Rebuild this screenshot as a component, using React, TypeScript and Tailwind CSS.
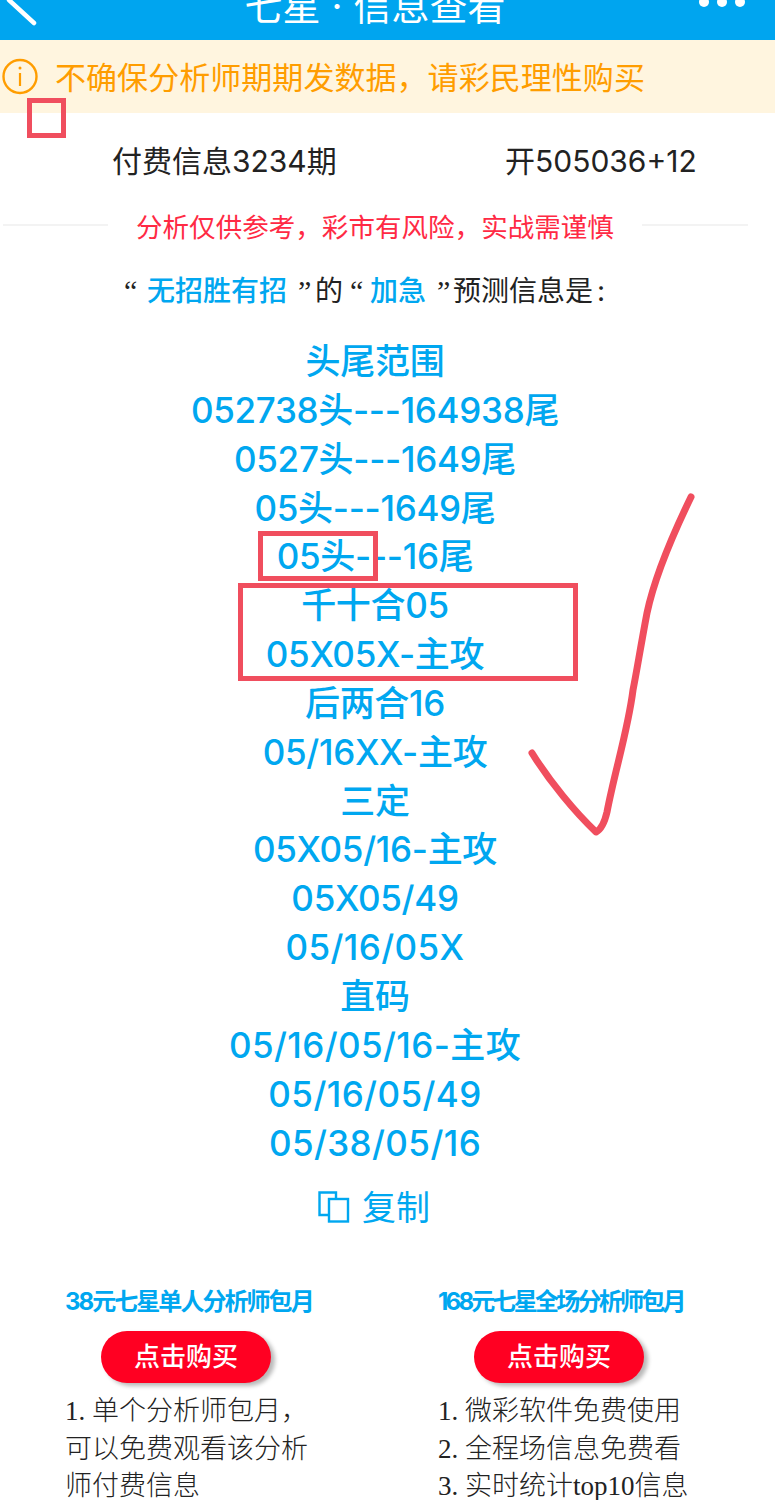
const cjk = "font-['Inter','Noto_Sans_CJK_SC',sans-serif]";
const quote = "font-['Liberation_Serif',serif] text-[30px] w-[12px]";

const picks = [
  "头尾范围",
  "052738头---164938尾",
  "0527头---1649尾",
  "05头---1649尾",
  "05头---16尾",
  "千十合05",
  "05X05X-主攻",
  "后两合16",
  "05/16XX-主攻",
  "三定",
  "05X05/16-主攻",
  "05X05/49",
  "05/16/05X",
  "直码",
  "05/16/05/16-主攻",
  "05/16/05/49",
  "05/38/05/16",
];

function Plan({ title, titleClass, lines }: { title: string; titleClass: string; lines: string[] }) {
  return (
    <div className="w-[300px]">
      <p className={`mt-[1px] text-[24px] leading-[30px] font-bold text-[#00a7f0] whitespace-nowrap ${titleClass}`}>
        {title}
      </p>
      <button
        type="button"
        className="mt-[14px] ml-[36px] block w-[170px] h-[52px] pb-[2px] rounded-full bg-[#ff0022] text-white text-[26px] font-medium shadow-[4px_3px_4px_rgba(0,0,0,0.28)]"
      >
        点击购买
      </button>
      <div className="mt-[10px] text-[27px] leading-[37.5px] font-light text-[#222] whitespace-nowrap font-['Liberation_Serif','Noto_Sans_CJK_SC',serif]">
        {lines.map((line) => (
          <p key={line}>{line}</p>
        ))}
      </div>
    </div>
  );
}

export default function App() {
  return (
    <div className={`relative w-[775px] h-[1500px] overflow-hidden bg-white ${cjk}`}>
      {/* Header, cut off by the top of the shot */}
      <header className="relative h-10 bg-[#00a5ef] overflow-hidden">
        <div className="w-[750px] mt-[-19px] text-center text-[38px] leading-[50px] text-white whitespace-nowrap">
          七星<span className="mx-[11px]">·</span>信息查看
        </div>
        <svg className="absolute left-0 top-0" width="40" height="30" viewBox="0 0 40 30">
          <path d="M9 0 L34 23" stroke="#fff" strokeWidth="4.5" strokeLinecap="round" fill="none" />
        </svg>
        <div className="absolute right-[30px] top-[-3px] flex gap-[8px]">
          <span className="w-[10px] h-[10px] rounded-full bg-white" />
          <span className="w-[10px] h-[10px] rounded-full bg-white" />
          <span className="w-[10px] h-[10px] rounded-full bg-white" />
        </div>
      </header>

      {/* Notice */}
      <div className="h-[73px] bg-[#fff5df] flex items-center pl-[2px] pb-[1px]">
        <svg width="36" height="37" viewBox="0 0 36 37" fill="none">
          <circle cx="18" cy="18.5" r="16.5" stroke="#ff9d00" strokeWidth="2.4" />
          <path d="M18 15 V28" stroke="#ff9d00" strokeWidth="2.2" />
          <circle cx="18" cy="10" r="1.5" fill="#ff9d00" />
        </svg>
        <span className="ml-[17px] mt-[4px] text-[31px] tracking-[0.05px] text-[#ff9d00] whitespace-nowrap">
          不确保分析师期期发数据，请彩民理性购买
        </span>
      </div>

      <div className="mt-[26px] flex h-[44px] items-center text-[30px] text-[#222] whitespace-nowrap">
        <span className="ml-[112px] w-[393px]">付费信息3234期</span>
        <span>开505036+12</span>
      </div>

      {/* Risk line */}
      <div className="mt-[24px] flex items-center h-[36px] px-[3px]">
        <div className="w-[105px] h-[2px] bg-[#f3f3f3]" />
        <span className="ml-[28px] mt-[6px] text-[26.5px] tracking-[0.05px] text-[#ff2a44] whitespace-nowrap">
          分析仅供参考，彩市有风险，实战需谨慎
        </span>
        <div className="ml-[28px] w-[106px] h-[2px] bg-[#f3f3f3]" />
      </div>

      <div className="mt-[28px] pl-[124px] flex h-[40px] leading-[40px] text-[28px] text-[#222] whitespace-nowrap">
        <span className={quote}>“</span>
        <span className="ml-[11px] text-[#00a7f0] font-medium">无招胜有招</span>
        <span className={`ml-[11px] ${quote}`}>”</span>
        <span className="ml-[5px]">的</span>
        <span className={`ml-[7px] ${quote}`}>“</span>
        <span className="ml-[8px] text-[#00a7f0] font-medium">加急</span>
        <span className={`ml-[11px] ${quote}`}>”</span>
        <span className="ml-[4px]">预测信息是</span>
        <span className="ml-[4px]">:</span>
      </div>

      <div className="mt-[26px] w-[750px] text-center text-[35px] leading-[48.85px] text-[#00a7f0] font-medium">
        {picks.map((line) => (
          <p
            key={line}
            className={`whitespace-nowrap ${line.split("/").length > 2 ? "tracking-[0.4px]" : "tracking-[-0.3px]"}`}
          >
            {line}
          </p>
        ))}
      </div>

      <div className="mt-[18px] w-[748px] h-[44px] flex items-center justify-center gap-[12px] text-[34px] text-[#00a7f0]">
        <svg width="32" height="32" viewBox="0 0 32 32" fill="none" stroke="#00a7f0" strokeWidth="2.4">
          <path d="M11 24 H1.5 V1.5 H18 V8" />
          <rect x="11" y="8" width="19" height="22.5" />
        </svg>
        <span>复制</span>
      </div>

      <div className="mt-[57px] pl-[65px] flex gap-[73px]">
        <Plan
          title="38元七星单人分析师包月"
          titleClass="tracking-[-1.95px]"
          lines={["1. 单个分析师包月，", "可以免费观看该分析", "师付费信息"]}
        />
        <Plan
          title="168元七星全场分析师包月"
          titleClass="tracking-[-2.75px]"
          lines={["1. 微彩软件免费使用", "2. 全程场信息免费看", "3. 实时统计top10信息"]}
        />
      </div>

      {/* Hand-drawn markup over the page */}
      <div className="absolute left-[27px] top-[98px] w-[39px] h-[40px] border-[5px] border-[#f04e5e]" />
      <div className="absolute left-[258px] top-[531px] w-[120px] h-[50px] border-[5px] border-[#f04e5e]" />
      <div className="absolute left-[238px] top-[583px] w-[340px] h-[98px] border-[5px] border-[#f04e5e]" />
      <svg className="absolute left-[520px] top-[485px]" width="185" height="360" viewBox="520 485 185 360" fill="none">
        <path
          d="M691 497 C675 530 655 575 647 613 C640 650 637 670 633 690 C628 730 615 770 607 812 C604 825 600 830 596 832 C575 812 550 782 532 753"
          stroke="#f04e5e"
          strokeWidth="7"
          strokeLinecap="round"
          strokeLinejoin="round"
        />
      </svg>
    </div>
  );
}
